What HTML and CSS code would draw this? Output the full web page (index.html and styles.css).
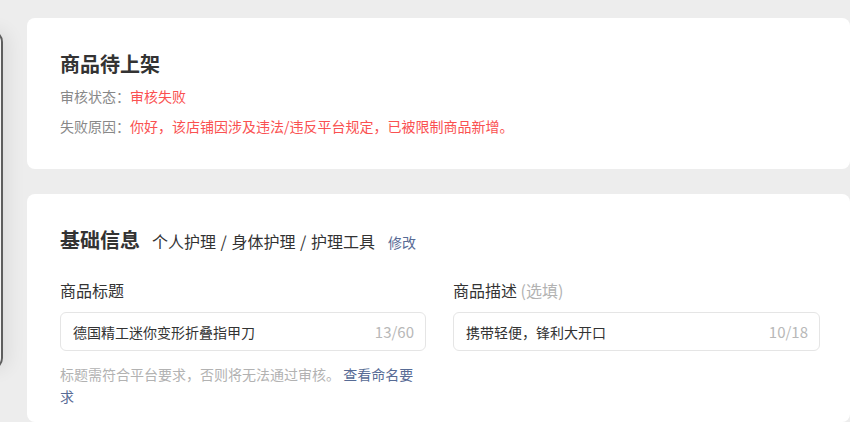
FILE: index.html
```html
<!DOCTYPE html>
<html lang="zh-CN">
<head>
<meta charset="utf-8">
<title>商品待上架</title>
<link rel="stylesheet" href="styles.css">
</head>
<body>
<div class="page">
  <aside class="preview"></aside>
  <main class="main">
    <section class="card status-card">
      <h1 class="card-title">商品待上架</h1>
      <div class="row"><span class="row-label">审核状态：</span><span class="danger">审核失败</span></div>
      <div class="row"><span class="row-label">失败原因：</span><span class="danger">你好，该店铺因涉及违法/违反平台规定，已被限制商品新增。</span></div>
    </section>
    <section class="card info-card">
      <div class="info-head">
        <h2 class="card-title">基础信息</h2>
        <span class="category">个人护理 / 身体护理 / 护理工具</span>
        <a class="link edit">修改</a>
      </div>
      <div class="form-grid">
        <div class="field">
          <div class="field-label">商品标题</div>
          <div class="input"><span class="input-text">德国精工迷你变形折叠指甲刀</span><span class="counter">13/60</span></div>
          <p class="hint">标题需符合平台要求，否则将无法通过审核。 <a class="link">查看命名要求</a></p>
        </div>
        <div class="field">
          <div class="field-label">商品描述 <span class="optional">(选填)</span></div>
          <div class="input"><span class="input-text">携带轻便，锋利大开口</span><span class="counter">10/18</span></div>
        </div>
      </div>
    </section>
  </main>
</div>
</body>
</html>
```

FILE: styles.css
```css
* { box-sizing: border-box; }
html, body { margin: 0; padding: 0; }
body {
  background: #ededed;
  font-family: "Noto Sans CJK SC", "Noto Sans", sans-serif;
  color: #333;
  width: 850px;
  height: 422px;
  overflow: hidden;
}
.page {
  display: flex;
  align-items: flex-start;
  gap: 24px;
  height: 422px;
  overflow: hidden;
}
.preview {
  flex: none;
  width: 120px;
  height: 340px;
  margin-left: -117px;
  margin-top: 30px;
  border: 2px solid #5e5e5e;
  border-radius: 12px;
  background: #f4f4f4;
  box-shadow: 6px 0 18px rgba(0, 0, 0, 0.07);
}
.main {
  flex: none;
  width: 823px;
  padding-top: 18px;
  display: flex;
  flex-direction: column;
  gap: 25px;
}
.card {
  background: #fff;
  border-radius: 8px;
}
.status-card {
  padding: 32px 33px 28px;
}
.card-title {
  margin: 0;
  font-size: 20px;
  line-height: 28px;
  font-weight: 700;
  color: #333;
}
.row {
  margin-top: 3px;
  font-size: 14px;
  line-height: 30px;
  color: #888;
}
.row + .row { margin-top: 0; }
.danger { color: #fa5151; }
.info-card {
  padding: 32px 30px 0 33px;
  height: 228px;
}
.info-head {
  display: flex;
  align-items: baseline;
}
.category {
  margin-left: 12px;
  font-size: 16px;
  word-spacing: 1px;
  color: #333;
}
.link { color: #576b95; text-decoration: none; }
.edit {
  margin-left: 13px;
  font-size: 14px;
}
.form-grid {
  margin-top: 24px;
  display: grid;
  grid-template-columns: 366px 367px;
  column-gap: 27px;
  align-items: start;
}
.field-label {
  font-size: 16px;
  line-height: 24px;
  color: #333;
}
.optional { color: #b2b2b2; }
.input {
  margin-top: 10px;
  height: 39px;
  border: 1px solid #e5e5e5;
  border-radius: 6px;
  padding: 0 11px 0 12px;
  display: flex;
  align-items: center;
  justify-content: space-between;
}
.input-text {
  font-size: 14px;
  color: #333;
}
.counter {
  font-size: 15px;
  color: #b8b8b8;
}
.hint {
  margin: 12px 0 0;
  font-size: 14px;
  line-height: 22px;
  color: #b2b2b2;
}
```
